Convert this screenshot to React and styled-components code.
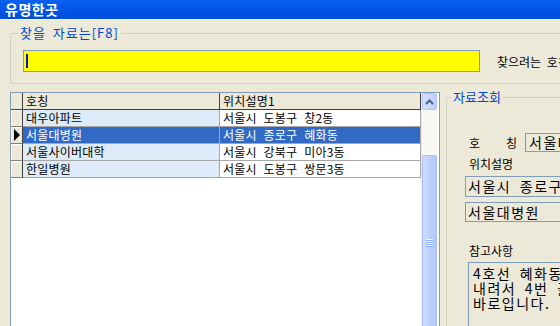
import React from 'react';
import styled, { createGlobalStyle } from 'styled-components';

const Global = createGlobalStyle`
  html, body { margin: 0; padding: 0; background: #ECE9D8; overflow: hidden; }
  body { font-family: "Noto Sans CJK KR", "Noto Sans", sans-serif; }
  * { box-sizing: border-box; }
`;

const Window = styled.div`
  width: 560px;
  height: 326px;
  overflow: hidden;
  background: #ECE9D8;
  display: flex;
  flex-direction: column;
`;

const TitleBar = styled.div`
  flex: none;
  height: 20px;
  padding-left: 5px;
  background: linear-gradient(#0B62EF, #0055E4 55%, #004DD8);
  border-bottom: 1px solid #F6F5EE;
  color: #fff;
  font-weight: bold;
  font-size: 14px;
  letter-spacing: 0.5px;
  line-height: 19px;
  white-space: nowrap;
`;

const Body = styled.div`
  display: flex;
  flex-direction: column;
  padding-left: 10px;
`;

const Group = styled.fieldset`
  margin: ${p => p.$top || 0}px 0 0 ${p => p.$left || 0}px;
  padding: 0;
  min-width: 0;
  width: ${p => p.$width}px;
  height: ${p => (p.$height ? `${p.$height}px` : 'auto')};
  border: 1px solid #D0D0BF;
  border-radius: 3px;
  flex: none;
`;

const Legend = styled.legend`
  margin-left: ${p => p.$offset}px;
  padding: 0 2px;
  color: #0046D5;
  font-size: 13px;
  letter-spacing: ${p => p.$spacing || 0}px;
  word-spacing: 3px;
  line-height: 16px;
  white-space: pre;
`;

const SearchRow = styled.div`
  display: flex;
  align-items: center;
  gap: 17px;
  padding: 9px 0 11px 12px;
`;

const SearchInput = styled.div`
  width: 457px;
  height: 22px;
  border: 1px solid #7F9DB9;
  background: #FFFF00;
  display: flex;
  align-items: center;
  padding-left: 2px;
  flex: none;
`;

const Caret = styled.span`
  width: 2px;
  height: 14px;
  background: #1010D0;
`;

const Hint = styled.span`
  font-size: 12px;
  color: #000;
  white-space: pre;
  word-spacing: 3px;
`;

const BottomRow = styled.div`
  display: flex;
  align-items: flex-start;
  margin-top: 5px;
`;

const Grid = styled.div`
  margin-top: 3px;
  width: 430px;
  height: 250px;
  border: 1px solid #7F9DB9;
  background: #fff;
  display: flex;
  flex: none;
`;

const Table = styled.div`
  width: 410px;
  display: grid;
  grid-template-columns: 12px 197px 201px;
  grid-auto-rows: 17px;
  align-content: start;
`;

const Cell = styled.div`
  font-size: 12px;
  line-height: 16px;
  padding-left: 3px;
  white-space: pre;
  word-spacing: 4px;
  letter-spacing: 0.2px;
  overflow: hidden;
  color: ${p => (p.$selected ? '#fff' : '#000')};
  background: ${p =>
    p.$selected ? '#316AC5' : p.$kind === 'name' ? '#DDEAF7' : p.$kind === 'header' ? '#ECE9D8' : '#fff'};
  border-right: 1px solid ${p => (p.$kind === 'header' ? '#404040' : '#A7A7A7')};
  border-bottom: 1px solid ${p => (p.$kind === 'header' ? '#404040' : '#A7A7A7')};
`;

const Indicator = styled.div`
  background: #ECE9D8;
  box-shadow: ${p => (p.$head ? 'none' : 'inset 1px 1px #fff')};
  border-right: 1px solid #404040;
  border-bottom: 1px solid ${p => (p.$head ? '#404040' : '#808080')};
  display: flex;
  align-items: center;
  padding-left: 2px;
`;

const ScrollBar = styled.div`
  width: 16px;
  display: flex;
  flex-direction: column;
  background: #F7F7F3;
  border-left: 1px solid #EDEDE8;
  flex: none;
`;

const ScrollButton = styled.div`
  height: 17px;
  border: 1px solid #B3C6F2;
  border-radius: 2px;
  background: linear-gradient(to right, #D3DFFD, #BBCEF9);
  display: flex;
  align-items: center;
  justify-content: center;
`;

const Track = styled.div`
  height: ${p => p.$h}px;
  flex: none;
`;

const Thumb = styled.div`
  height: 176px;
  flex: none;
  border: 1px solid #A9BEF2;
  border-radius: 2px;
  background: linear-gradient(to right, #CDDBFD, #BACDFB 60%, #B3C7F8);
  display: flex;
  align-items: center;
  justify-content: center;
`;

const Grip = styled.div`
  width: 7px;
  height: 8px;
  background: repeating-linear-gradient(to bottom, #F0F5FF 0 1px, #8DAEF5 1px 2px);
`;

const Filler = styled.div`
  width: 2px;
  background: #fff;
`;

const Content = styled.div`
  display: flex;
  flex-direction: column;
  padding-top: 28px;
`;

const NameRow = styled.div`
  display: flex;
  align-items: center;
  gap: 8px;
  margin-left: 22px;
  height: 19px;
`;

const SpacedLabel = styled.div`
  width: 48px;
  display: flex;
  justify-content: space-between;
  font-size: 12px;
  line-height: 15px;
  color: #000;
  flex: none;
`;

const Label = styled.div`
  margin: ${p => p.$top}px 0 0 22px;
  font-size: 12px;
  line-height: 15px;
  color: #000;
`;

const Field = styled.div`
  margin: ${p => p.$top || 0}px 0 0 ${p => p.$left || 0}px;
  height: ${p => p.$h}px;
  width: 200px;
  flex: none;
  border: 1px solid #7F9DB9;
  background: #ECE9D8;
  padding-left: ${p => p.$pad || 2}px;
  font-size: 14px;
  letter-spacing: 1.5px;
  word-spacing: 4px;
  line-height: ${p => p.$h - 2}px;
  color: #000;
  white-space: pre;
  overflow: hidden;
`;

const Memo = styled.div`
  margin: 4px 0 0 21px;
  height: 80px;
  width: 200px;
  border: 1px solid #7F9DB9;
  background: #ECE9D8;
  padding: 3px 0 0 4px;
  font-size: 14px;
  letter-spacing: 1.5px;
  word-spacing: 4px;
  line-height: 15px;
  color: #000;
  white-space: pre;
  overflow: hidden;
`;

const rows = [
  { name: '대우아파트', loc: '서울시 도봉구 창2동' },
  { name: '서울대병원', loc: '서울시 종로구 혜화동', selected: true },
  { name: '서울사이버대학', loc: '서울시 강북구 미아3동' },
  { name: '한일병원', loc: '서울시 도봉구 쌍문3동' },
];

const Arrow = () => (
  <svg width="8" height="12" viewBox="0 0 8 12">
    <polygon points="1,0 7,6 1,12" fill="#000" />
  </svg>
);

const UpChevron = () => (
  <svg width="9" height="6" viewBox="0 0 9 6">
    <polyline points="1,5 4.5,1.5 8,5" fill="none" stroke="#4D6185" strokeWidth="2" />
  </svg>
);

export default function App() {
  return (
    <Window>
      <Global />
      <TitleBar>유명한곳</TitleBar>
      <Body>
        <Group $top={5} $width={620}>
          <Legend $offset={7} $spacing={1}>찾을 자료는[F8]</Legend>
          <SearchRow>
            <SearchInput>
              <Caret />
            </SearchInput>
            <Hint>찾으려는 호칭을</Hint>
          </SearchRow>
        </Group>
        <BottomRow>
          <Grid>
            <Table>
              <Indicator $head />
              <Cell $kind="header">호칭</Cell>
              <Cell $kind="header">위치설명1</Cell>
              {rows.map(r => (
                <React.Fragment key={r.name}>
                  <Indicator>{r.selected && <Arrow />}</Indicator>
                  <Cell $kind="name" $selected={r.selected}>{r.name}</Cell>
                  <Cell $kind="loc" $selected={r.selected}>{r.loc}</Cell>
                </React.Fragment>
              ))}
            </Table>
            <ScrollBar>
              <ScrollButton>
                <UpChevron />
              </ScrollButton>
              <Track $h={45} />
              <Thumb>
                <Grip />
              </Thumb>
            </ScrollBar>
            <Filler />
          </Grid>
          <Group $left={6} $width={200} $height={260}>
            <Legend $offset={4}>자료조회</Legend>
            <Content>
              <NameRow>
                <SpacedLabel>
                  <span>호</span>
                  <span>칭</span>
                </SpacedLabel>
                <Field $h={19} $pad={3}>서울대병원</Field>
              </NameRow>
              <Label $top={4}>위치설명</Label>
              <Field $top={5} $left={18} $h={21}>서울시 종로구 혜화동</Field>
              <Field $top={5} $left={18} $h={20}>서울대병원</Field>
              <Label $top={21}>참고사항</Label>
              <Memo>{'4호선 혜화동역에서\n내려서 4번 출구로\n바로입니다.'}</Memo>
            </Content>
          </Group>
        </BottomRow>
      </Body>
    </Window>
  );
}
